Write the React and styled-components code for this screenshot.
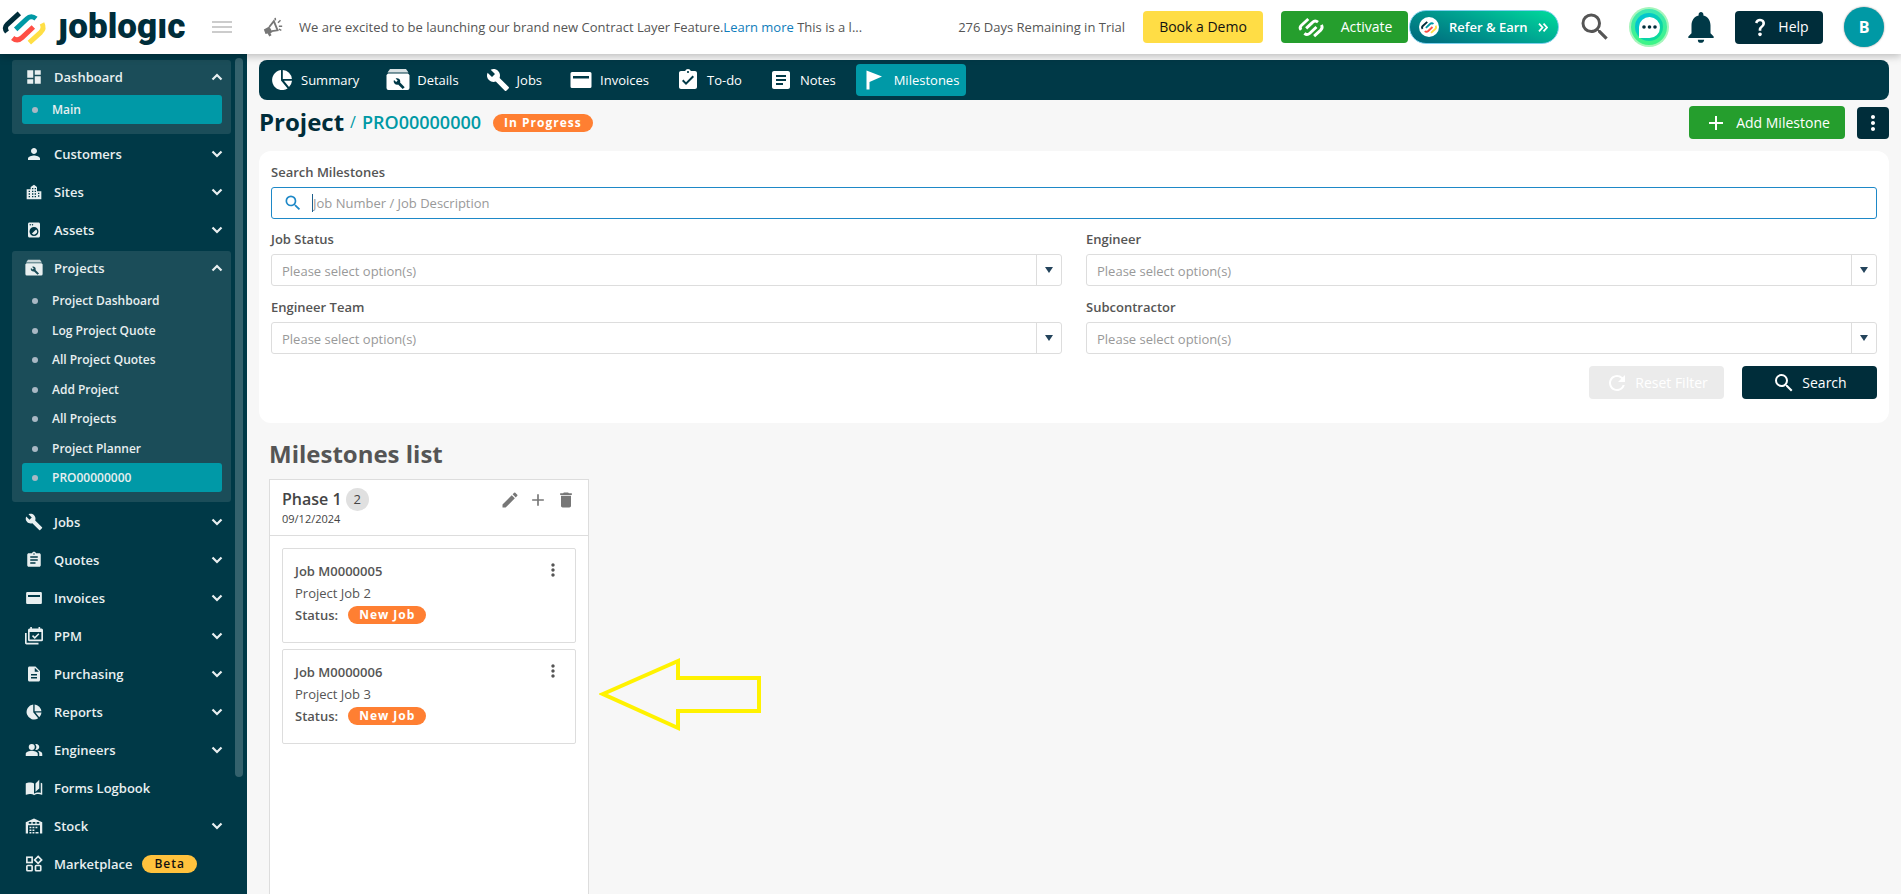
import React from "react";
import styled, { createGlobalStyle, css } from "styled-components";
import {
  MdAdd,
  MdArticle,
  MdAssignment,
  MdAssignmentTurnedIn,
  MdAutoStories,
  MdBuild,
  MdDashboard,
  MdDelete,
  MdDescription,
  MdEdit,
  MdLocalLaundryService,
  MdMoreVert,
  MdNotifications,
  MdPeopleAlt,
  MdPerson,
  MdQuestionMark,
  MdRefresh,
  MdSearch,
} from "react-icons/md";

const GlobalStyle = createGlobalStyle`
  * {
    box-sizing: border-box;
  }
  body {
    margin: 0;
    background: #f7f7f7;
    color: #555;
    font-family: "Open Sans", "Noto Sans", sans-serif;
    font-size: 13px;
    line-height: 20px;
  }
  button, input, select {
    font: inherit;
    color: inherit;
  }
  button {
    border: 0;
    padding: 0;
    background: none;
    cursor: pointer;
  }
  a {
    color: inherit;
    text-decoration: none;
  }
  h1, h2, h3, p, ul {
    margin: 0;
    padding: 0;
  }
  ul {
    list-style: none;
  }
  svg {
    display: block;
    flex-shrink: 0;
  }
`;

/* ---------- icons ---------- */

const LogoMark = ({ size, colors }) => (
  <svg width={size} height={size} viewBox="0 12 144 144" fill="none" strokeWidth="15">
    <path d="M58 43 L22 76 Q11 87 21 99" stroke={colors[0]} />
    <path d="M47 91 L80 60 Q93 47 108 59" stroke={colors[1]} />
    <path d="M38 117 Q52 129 66 116 L100 84" stroke={colors[2]} />
    <path d="M88 131 L122 100 Q134 88 126 73" stroke={colors[3]} />
  </svg>
);

const brand = ["#002d3a", "#0099a5", "#ff4f45", "#ffdf45"];
const white = ["#fff", "#fff", "#fff", "#fff"];

const Svg = ({ size = 24, children, ...rest }) => (
  <svg width={size} height={size} viewBox="0 0 24 24" fill="currentColor" {...rest}>
    {children}
  </svg>
);

const PieIcon = (p) => (
  <Svg {...p}>
    <path d="M11 2.1v10.3l6.6 8A10 10 0 1 1 11 2.1z" />
    <path d="M12.8 2a10 10 0 0 1 9.1 9h-9.1z" />
    <path d="M13.9 12.8H22a10 10 0 0 1-3 6.3z" />
  </Svg>
);

const ToolboxIcon = (p) => (
  <Svg {...p}>
    <path d="M4 1h16l2.500 3.500h-21z" opacity=".85" />
    <path
      fillRule="evenodd"
      d="M2 5.500h20L23.500 7v13a2 2 0 0 1-2 2h-19a2 2 0 0 1-2-2V7zM18.700 19.200l-4.600-4.600c.4-1.200.1-2.500-.8-3.500-1-1-2.500-1.200-3.700-.6l2.100 2.100-1.500 1.500-2.200-2.100c-.6 1.200-.3 2.700.7 3.700.9.9 2.300 1.200 3.400.8l4.600 4.500z"
    />
  </Svg>
);

const CardIcon = (p) => (
  <Svg {...p}>
    <path fillRule="evenodd" d="M3 4h18a1.500 1.500 0 0 1 1.500 1.500v13A1.500 1.500 0 0 1 21 20H3a1.500 1.500 0 0 1-1.500-1.500v-13A1.500 1.500 0 0 1 3 4zm1 4v2.500h16V8z" />
  </Svg>
);

const CityIcon = (p) => (
  <Svg {...p}>
    <path
      fillRule="evenodd"
      d="M1 8h6V4.500L12 1l4.500 3.500V11H23v12H1zM4 10v2h2v-2zm0 4v2h2v-2zm0 4v2h2v-2zM9 6v2h2V6zm0 4v2h2v-2zm0 4v2h2v-2zm0 4v2h2v-2zm4-12v2h2V6zm0 4v2h2v-2zm0 4v2h2v-2zm0 4v2h2v-2zm5-5v2h2v-2zm0 4v2h2v-2z"
    />
  </Svg>
);

const PpmIcon = (p) => (
  <Svg {...p}>
    <path d="M0 8h2.200v13H18v2.200H2A2 2 0 0 1 0 21z" />
    <path
      fillRule="evenodd"
      d="M7 0h2.200v2H18V0h2.200v2H22a2 2 0 0 1 2 2v13a2 2 0 0 1-2 2H6a2 2 0 0 1-2-2V4a2 2 0 0 1 2-2h1zM6.200 6.500v10.300h15.600V6.500z"
    />
    <path d="M10 11.500l3 3 5.500-5.500" fill="none" stroke="currentColor" strokeWidth="2" />
  </Svg>
);

const StockIcon = (p) => (
  <Svg {...p}>
    <path fillRule="evenodd" d="M1 7l11-5 11 5v15h-3V11H4v11H1zM5 6.500v2.500h3.500V6.500zm5.200 0v2.500h3.600V6.500zm5.300 0v2.500H19V6.500z" />
    <path d="M6 13h2.500v2H6zm4 0h2.500v2H10zm4 0h2.500v2H14zM6 16.500h2.500v2H6zm4 0h2.500v2H10zM6 20h2.500v2H6zm4 0h2.500v2H10zm4 0h4v2h-4z" />
  </Svg>
);

const WidgetsIcon = (p) => (
  <Svg {...p} fill="none" stroke="currentColor" strokeWidth="2.200">
    <rect x="2.500" y="3" width="7" height="7" />
    <rect x="2.500" y="14" width="7" height="7" rx="1" />
    <rect x="14" y="14" width="7" height="7" rx="1" />
    <path d="M17.500 1.800l4.700 4.700-4.700 4.700-4.700-4.700z" />
  </Svg>
);

const FlagIcon = (p) => (
  <Svg {...p}>
    <path d="M3.500 2.500L19 8.500 6.500 14v7.500h-3z" />
  </Svg>
);

const MegaphoneIcon = () => (
  <Svg size={20} color="#777">
    <path d="M1 15l6.500-3.500 4 6.500-2.500 1.400 1.200 2.400-2.600 1.500-2-3.600-2.600.8z" />
    <path d="M7.500 12L13 5l4.500 11-7 1" fill="none" stroke="currentColor" strokeWidth="2.200" />
    <path d="M15 4l-.5-3M18 7l3-3M19 11h4M19 14.500l3 1.500" fill="none" stroke="currentColor" strokeWidth="1.800" />
  </Svg>
);

const Chevron = ({ up }) => (
  <svg width="12" height="8" viewBox="0 0 12 8" fill="none" stroke="currentColor" strokeWidth="2.200">
    <path d={up ? "M1.500 6.500L6 2l4.500 4.500" : "M1.500 1.500L6 6l4.500-4.500"} />
  </svg>
);

/* ---------- header ---------- */

const Header = styled.header`
  position: sticky;
  top: 0;
  z-index: 2;
  display: flex;
  align-items: center;
  height: 54px;
  padding: 0 17px 0 0;
  background: #fff;
  box-shadow: 0 2px 8px rgba(0, 0, 0, 0.25);
`;

const Logo = styled.a`
  display: flex;
  align-items: center;
  gap: 10px;
  width: 212px;
  color: #002d3a;
  font-family: Roboto, "Noto Sans", sans-serif;
  font-size: 35px;
  font-weight: 900;
  line-height: 44px;
`;

const MenuToggle = styled.button`
  display: flex;
  flex-direction: column;
  gap: 3px;
  width: 20px;
  margin-right: 31px;
  span {
    height: 2px;
    background: #ccc;
  }
`;

const News = styled.p`
  flex: 1;
  min-width: 0;
  margin-left: 16px;
  overflow: hidden;
  white-space: nowrap;
  a {
    color: #0f7dbb;
  }
`;

const Trial = styled.span`
  margin-right: 18px;
  white-space: nowrap;
`;

const Button = styled.button`
  display: flex;
  align-items: center;
  justify-content: center;
  gap: ${(p) => p.$gap || 8}px;
  height: ${(p) => p.$height || 33}px;
  min-width: ${(p) => p.$width}px;
  border-radius: 4px;
  background: ${(p) => p.$bg};
  color: ${(p) => p.$color || "#fff"};
  font-size: 14px;
  white-space: nowrap;
`;

const HeaderActions = styled.div`
  display: flex;
  align-items: center;
  gap: 18px;
`;

const Refer = styled.button`
  display: flex;
  align-items: center;
  gap: 10px;
  height: 34px;
  width: 150px;
  padding: 0 8px 0 9px;
  border: 1px solid #7fd0ee;
  border-radius: 17px;
  background: linear-gradient(20deg, #00707f 10%, #00a391 55%, #00d69b 95%);
  color: #fff;
  font-weight: 600;
  white-space: nowrap;
`;

const ReferMark = styled.span`
  display: grid;
  place-items: center;
  width: 20px;
  height: 20px;
  border-radius: 50%;
  background: #fff;
`;

const Activation = styled.div`
  display: flex;
  align-items: center;
  gap: 1px;
`;

const IconButton = styled.button`
  display: grid;
  place-items: center;
  margin-right: ${(p) => p.$space || 0}px;
  color: ${(p) => p.$color};
`;

const ToolIcons = styled.div`
  display: flex;
  align-items: center;
  gap: 12px;
  margin-left: 18px;
`;

const Avatar = styled.button`
  width: 40px;
  height: 40px;
  margin-left: 9px;
  border-radius: 50%;
  background: #0099a5;
  box-shadow: 0 0 2px #888;
  color: #fff;
  font-size: 16px;
  font-weight: 700;
`;

const ChatIcon = () => (
  <svg width="42" height="42" viewBox="0 0 42 42">
    <defs>
      <linearGradient id="ring" x1="0" y1="0" x2="0" y2="1">
        <stop offset="0" stopColor="#3fe8b4" />
        <stop offset="1" stopColor="#3df585" />
      </linearGradient>
      <linearGradient id="chat" x1="0" y1="0" x2="1" y2="1">
        <stop offset="0" stopColor="#00bfe0" />
        <stop offset="1" stopColor="#10e08c" />
      </linearGradient>
    </defs>
    <circle cx="21" cy="21" r="20" fill="#a5f5bb" />
    <circle cx="21" cy="21" r="18" fill="url(#ring)" />
    <circle cx="21" cy="21" r="14" fill="url(#chat)" />
    <path d="M11 32V21A10.500 10.500 0 1 1 21.500 32z" fill="#fff" />
    <circle cx="16" cy="21" r="1.800" fill="#002d3a" />
    <circle cx="21.500" cy="21" r="1.800" fill="#002d3a" />
    <circle cx="27" cy="21" r="1.800" fill="#002d3a" />
  </svg>
);

const TopBar = () => (
  <Header>
    <Logo href="#" aria-label="joblogic">
      <LogoMark size={48} colors={brand} />
      ȷoblogıc
    </Logo>
    <MenuToggle aria-label="Toggle menu">
      <span />
      <span />
      <span />
    </MenuToggle>
    <MegaphoneIcon />
    <News>
      We are excited to be launching our brand new Contract Layer Feature.<a href="#">Learn more</a> This is a l...
    </News>
    <Trial>276 Days Remaining in Trial</Trial>
    <HeaderActions>
      <Button $bg="#ffdd45" $color="#111" $width={120} $height={32}>
        Book a Demo
      </Button>
      <Activation>
        <Button $bg="#259e2d" $width={127} $height={32} $gap={16}>
          <LogoMark size={28} colors={white} />
          Activate
        </Button>
        <Refer>
          <ReferMark>
            <LogoMark size={18} colors={brand} />
          </ReferMark>
          <span>Refer &amp; Earn</span>
          <svg width="10" height="9" viewBox="0 0 10 9" fill="none" stroke="#fff" strokeWidth="1.800">
            <path d="M1 .7l3.500 3.800L1 8.300M5.500.7L9 4.500 5.500 8.300" />
          </svg>
        </Refer>
      </Activation>
    </HeaderActions>
    <ToolIcons>
      <IconButton $color="#555" $space={3} aria-label="Search">
        <MdSearch size={36} />
      </IconButton>
      <IconButton aria-label="Chat">
        <ChatIcon />
      </IconButton>
      <IconButton $color="#003947" $space={3} aria-label="Notifications">
        <MdNotifications size={38} />
      </IconButton>
      <Button $bg="#002d3a" $width={88} $gap={7}>
        <MdQuestionMark size={22} />
        Help
      </Button>
      <Avatar>B</Avatar>
    </ToolIcons>
  </Header>
);

/* ---------- sidebar ---------- */

const Sidebar = styled.nav`
  display: flex;
  gap: 4px;
  width: 247px;
  flex-shrink: 0;
  padding: 4px 4px 4px 12px;
  background: #003947;
  color: #e8eff0;
`;

const SideList = styled.ul`
  flex: 1;
`;

const ScrollThumb = styled.div`
  width: 8px;
  height: calc(100% - 113px);
  border-radius: 4px;
  background: #34626d;
`;

const SideGroup = styled.li`
  border-radius: 3px;
  ${(p) =>
    p.$open &&
    css`
      margin: 2px 0 1px;
      padding-bottom: 10px;
      background: #1b4d59;
    `}
`;

const SideHead = styled.button`
  display: grid;
  grid-template-columns: 20px auto 1fr 12px;
  align-items: center;
  width: 100%;
  height: ${(p) => (p.$open ? 33 : 38)}px;
  padding: 0 8px 0 12px;
  font-weight: 600;
  text-align: left;
  svg {
    justify-self: center;
  }
  span {
    margin-left: 10px;
  }
`;

const SubList = styled.ul`
  padding-top: 2px;
  li:nth-child(even) {
    margin-top: 1px;
  }
`;

const SubItem = styled.a`
  display: flex;
  align-items: center;
  gap: 14px;
  margin: 0 9px 0 10px;
  padding: 5px 10px;
  border-radius: 3px;
  font-size: 12px;
  font-weight: 600;
  line-height: 19px;
  background: ${(p) => (p.$active ? "#0099a7" : "transparent")};
  &::before {
    content: "";
    width: 6px;
    height: 6px;
    border-radius: 50%;
    background: #a9b8c4;
  }
`;

const Beta = styled.em`
  justify-self: start;
  margin-left: 10px;
  padding: 0 12px;
  border-radius: 9px;
  background: #ffc23d;
  color: #111;
  font-size: 12px;
  font-style: normal;
  line-height: 18px;
  letter-spacing: 1px;
`;

const sections = [
  { label: "Dashboard", icon: MdDashboard, items: ["Main"], active: "Main" },
  { label: "Customers", icon: MdPerson },
  { label: "Sites", icon: CityIcon, size: 16 },
  { label: "Assets", icon: MdLocalLaundryService },
  {
    label: "Projects",
    icon: ToolboxIcon,
    items: [
      "Project Dashboard",
      "Log Project Quote",
      "All Project Quotes",
      "Add Project",
      "All Projects",
      "Project Planner",
      "PRO00000000",
    ],
    active: "PRO00000000",
  },
  { label: "Jobs", icon: MdBuild },
  { label: "Quotes", icon: MdAssignment },
  { label: "Invoices", icon: CardIcon },
  { label: "PPM", icon: PpmIcon },
  { label: "Purchasing", icon: MdDescription },
  { label: "Reports", icon: PieIcon },
  { label: "Engineers", icon: MdPeopleAlt },
  { label: "Forms Logbook", icon: MdAutoStories, leaf: true },
  { label: "Stock", icon: StockIcon },
  { label: "Marketplace", icon: WidgetsIcon, leaf: true, beta: true },
];

const SideNav = () => (
  <Sidebar>
    <SideList>
      {sections.map(({ label, icon: Icon, size, items, active, leaf, beta }) => (
        <SideGroup key={label} $open={!!items}>
          <SideHead $open={!!items}>
            <Icon size={size || 18} />
            <span>{label}</span>
            {beta ? <Beta>Beta</Beta> : <i />}
            {!leaf && <Chevron up={!!items} />}
          </SideHead>
          {items && (
            <SubList>
              {items.map((item) => (
                <li key={item}>
                  <SubItem href="#" $active={item === active}>
                    {item}
                  </SubItem>
                </li>
              ))}
            </SubList>
          )}
        </SideGroup>
      ))}
    </SideList>
    <ScrollThumb />
  </Sidebar>
);

/* ---------- content ---------- */

const Page = styled.div`
  display: flex;
  flex-direction: column;
  min-height: 100vh;
`;

const Body = styled.div`
  display: flex;
  flex: 1;
`;

const Main = styled.main`
  display: flex;
  flex-direction: column;
  flex: 1;
  min-width: 0;
  padding: 6px 12px 0;
`;

const Tabs = styled.nav`
  display: flex;
  gap: 13px;
  padding: 4px;
  border-radius: 8px;
  background: #003947;
`;

const Tab = styled.a`
  display: flex;
  align-items: center;
  gap: 7px;
  height: 32px;
  padding: 0 7px;
  border-radius: 4px;
  background: ${(p) => (p.$active ? "#0099a7" : "transparent")};
  color: #fff;
`;

const tabs = [
  ["Summary", PieIcon],
  ["Details", ToolboxIcon],
  ["Jobs", MdBuild],
  ["Invoices", CardIcon],
  ["To-do", MdAssignmentTurnedIn],
  ["Notes", MdArticle],
  ["Milestones", FlagIcon],
];

const TitleRow = styled.div`
  display: flex;
  align-items: center;
  gap: 12px;
  height: 51px;
  padding-bottom: 6px;
`;

const Title = styled.h1`
  display: flex;
  align-items: center;
  gap: 6px;
  padding-bottom: 2px;
  color: #002d3a;
  font-size: 24px;
  font-weight: 700;
  a {
    color: #0099a5;
    font-size: 18px;
    font-weight: 600;
  }
  small {
    color: #0099a5;
    font-size: 16px;
    font-weight: 400;
  }
`;

const TitleActions = styled.div`
  display: flex;
  align-items: center;
  gap: 12px;
  margin-left: auto;
`;

const Badge = styled.span`
  padding: 0 11px;
  border-radius: 9px;
  background: #ff7f32;
  color: #fff;
  font-size: 12px;
  font-weight: 700;
  line-height: 18px;
  letter-spacing: 1px;
`;

const Filters = styled.form`
  padding: 11px 12px 24px;
  border-radius: 12px;
  background: #fff;
`;

const Field = styled.div`
  display: flex;
  flex-direction: column;
  gap: 5px;
  label {
    font-weight: 600;
  }
`;

const SearchBox = styled.div`
  display: flex;
  align-items: center;
  height: 32px;
  padding-left: 11px;
  border: 1px solid #1e88c7;
  border-radius: 3px;
  color: #1e88c7;
  input {
    flex: 1;
    border: 0;
    outline: 0;
    padding: 0;
    background: none;
    color: #555;
    &::placeholder {
      color: #999;
      opacity: 1;
    }
  }
`;

const Caret = styled.span`
  width: 1px;
  height: 18px;
  margin-left: 9px;
  background: #1e5f8c;
`;

const FieldGrid = styled.div`
  display: grid;
  grid-template-columns: 1fr 1fr;
  gap: 11px 24px;
  margin: 10px 0 12px;
`;

const SelectBox = styled.div`
  display: flex;
  align-items: center;
  height: 32px;
  border: 1px solid #ddd;
  border-radius: 3px;
  select {
    flex: 1;
    height: 30px;
    padding: 2px 10px 0;
    border: 0;
    border-right: 1px solid #ddd;
    appearance: none;
    background: none;
    color: #999;
  }
  svg {
    margin: 0 8px;
  }
`;

const FormActions = styled.div`
  display: flex;
  justify-content: flex-end;
  gap: 18px;
`;

const ListTitle = styled.h2`
  margin: 15px 10px 9px;
  font-size: 24px;
  font-weight: 700;
  line-height: 32px;
`;

const Board = styled.div`
  display: flex;
  flex: 1;
  gap: 10px;
  padding-left: 10px;
`;

const Column = styled.section`
  width: 320px;
  border: 1px solid #ddd;
  border-bottom: 0;
  background: #fff;
`;

const ColumnHead = styled.header`
  display: flex;
  align-items: flex-start;
  justify-content: space-between;
  height: 56px;
  padding: 8px 12px 0;
  border-bottom: 1px solid #ddd;
  h3 {
    display: flex;
    align-items: center;
    gap: 4px;
    color: #444;
    font-size: 16px;
    font-weight: 600;
    line-height: 23px;
  }
  time {
    display: block;
    color: #444;
    font-size: 11px;
    line-height: 16px;
  }
`;

const Count = styled.span`
  width: 23px;
  border-radius: 50%;
  background: #e0e0e0;
  font-size: 13px;
  font-weight: 400;
  text-align: center;
`;

const ColumnTools = styled.div`
  display: flex;
  gap: 8px;
  padding-top: 2px;
`;

const Jobs = styled.ul`
  display: grid;
  gap: 6px;
  padding: 12px;
`;

const JobCard = styled.li`
  display: flex;
  justify-content: space-between;
  align-items: flex-start;
  padding: 11px 12px 16px;
  border: 1px solid #ddd;
  border-radius: 2px;
  line-height: 22px;
  b {
    font-weight: 600;
  }
`;

const Status = styled.div`
  display: flex;
  align-items: center;
  gap: 10px;
  height: 22px;
`;

const Arrow = styled.svg`
  margin-top: 177px;
`;

const jobs = [
  { number: "Job M0000005", name: "Project Job 2" },
  { number: "Job M0000006", name: "Project Job 3" },
];

const Select = ({ id, label }) => (
  <Field>
    <label htmlFor={id}>{label}</label>
    <SelectBox>
      <select id={id}>
        <option>Please select option(s)</option>
      </select>
      <svg width="8" height="6" viewBox="0 0 8 6">
        <path d="M0 0h8L4 6z" fill="#24445c" />
      </svg>
    </SelectBox>
  </Field>
);

const App = () => {
  return (
    <Page>
      <GlobalStyle />
      <TopBar />
      <Body>
        <SideNav />
        <Main>
          <Tabs>
            {tabs.map(([label, Icon]) => (
              <Tab key={label} href="#" $active={label === "Milestones"}>
                <Icon size={24} />
                {label}
              </Tab>
            ))}
          </Tabs>

          <TitleRow>
            <Title>
              Project <small>/</small>
              <a href="#">PRO00000000</a>
            </Title>
            <Badge>In Progress</Badge>
            <TitleActions>
              <Button $bg="#259e2d" $width={156}>
                <MdAdd size={24} />
                Add Milestone
              </Button>
              <Button $bg="#002d3a" $width={32} $height={32} aria-label="More">
                <MdMoreVert size={24} />
              </Button>
            </TitleActions>
          </TitleRow>

          <Filters>
            <Field>
              <label htmlFor="search">Search Milestones</label>
              <SearchBox>
                <MdSearch size={20} />
                <Caret />
                <input id="search" placeholder="Job Number / Job Description" />
              </SearchBox>
            </Field>
            <FieldGrid>
              <Select id="status" label="Job Status" />
              <Select id="engineer" label="Engineer" />
              <Select id="team" label="Engineer Team" />
              <Select id="subcontractor" label="Subcontractor" />
            </FieldGrid>
            <FormActions>
              <Button type="button" $bg="#ebebeb" $width={135} $gap={6} disabled>
                <MdRefresh size={24} />
                Reset Filter
              </Button>
              <Button type="button" $bg="#002d3a" $width={135} $gap={6}>
                <MdSearch size={24} />
                Search
              </Button>
            </FormActions>
          </Filters>

          <ListTitle>Milestones list</ListTitle>
          <Board>
            <Column>
              <ColumnHead>
                <div>
                  <h3>
                    Phase 1 <Count>2</Count>
                  </h3>
                  <time>09/12/2024</time>
                </div>
                <ColumnTools>
                  <IconButton $color="#777" aria-label="Edit">
                    <MdEdit size={20} />
                  </IconButton>
                  <IconButton $color="#777" aria-label="Add">
                    <MdAdd size={20} />
                  </IconButton>
                  <IconButton $color="#777" aria-label="Delete">
                    <MdDelete size={20} />
                  </IconButton>
                </ColumnTools>
              </ColumnHead>
              <Jobs>
                {jobs.map((job) => (
                  <JobCard key={job.number}>
                    <div>
                      <b>{job.number}</b>
                      <p>{job.name}</p>
                      <Status>
                        <b>Status:</b>
                        <Badge>New Job</Badge>
                      </Status>
                    </div>
                    <IconButton $color="#555" aria-label="Job menu">
                      <MdMoreVert size={20} />
                    </IconButton>
                  </JobCard>
                ))}
              </Jobs>
            </Column>
            <Arrow width="164" height="76" viewBox="0 0 164 76">
              <path d="M4 38L79 5v17h81v33H79v17z" fill="none" stroke="#fff200" strokeWidth="4" />
            </Arrow>
          </Board>
        </Main>
      </Body>
    </Page>
  );
};

export default App;
